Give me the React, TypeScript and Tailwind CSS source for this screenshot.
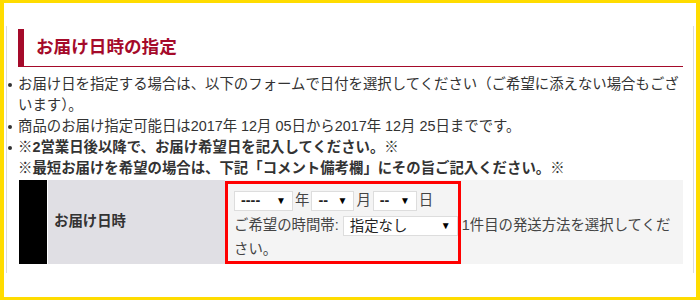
import React from "react";

const FONT = { fontFamily: '"Liberation Sans", "Noto Sans CJK JP", sans-serif' };

function FakeSelect({ w, label, bold }: { w: number; label: string; bold?: boolean }) {
  return (
    <span
      className="inline-flex h-[20px] items-center justify-between border border-[#dddddd] bg-white pl-[6px] pr-[6px] align-middle text-[#222]"
      style={{ width: w }}
    >
      <span className={bold ? "font-bold leading-none" : "leading-none"}>{label}</span>
      <span className="text-[10px] leading-none text-black">▼</span>
    </span>
  );
}

function Dot() {
  return (
    <span className="flex w-[11px] shrink-0 justify-start pt-[9px]">
      <span className="ml-[1px] block h-[4px] w-[4px] rounded-full bg-[#333]" />
    </span>
  );
}

export default function App() {
  return (
    <div
      className="h-[300px] w-[700px] overflow-hidden border-x-4 border-y-[3px] border-[#ffdc00] bg-white text-[14.4px] text-[#333]"
      style={FONT}
    >
      <div className="mx-[2px] mt-[23px] h-[247px] border-x border-[#dcdcdc] pl-[11px] pr-[10px] pt-[3px]">
        <div className="flex h-[38px] items-center border-b border-l-[6px] border-[#a50a2a] pl-[12px] text-[17.6px] font-bold text-[#a50a2a]">
          お届け日時の指定
        </div>
        <ul className="mt-[7px] ml-[-11px] leading-[21px]">
          <li className="flex">
            <Dot />
            <span>
              お届け日を指定する場合は、以下のフォームで日付を選択してください（ご希望に添えない場合もございます）。
            </span>
          </li>
          <li className="flex">
            <Dot />
            <span>商品のお届け指定可能日は2017年 12月 05日から2017年 12月 25日までです。</span>
          </li>
          <li className="flex font-bold">
            <Dot />
            <span>
              ※2営業日後以降で、お届け希望日を記入してください。※
              <br />
              ※最短お届けを希望の場合は、下記「コメント備考欄」にその旨ご記入ください。※
            </span>
          </li>
        </ul>
        <div className="ml-[1px] mt-[1px] flex h-[84px]">
          <div className="w-[28px] shrink-0 bg-black" />
          <div className="ml-[1px] flex w-[177px] shrink-0 items-center bg-[#e0dfe4] pl-[6px] font-bold text-[#333]">
            お届け日時
          </div>
          <div className="relative flex-1 bg-[#f4f4f4] pl-[9px] pr-[6px] pt-[8px] text-[#444]">
            <div className="flex h-[25px] items-center gap-[1px]">
              <FakeSelect w={59} label="----" bold />
              <span className="px-[1px]">年</span>
              <FakeSelect w={43} label="--" bold />
              <span className="px-[1px]">月</span>
              <FakeSelect w={44} label="--" bold />
              <span className="px-[1px]">日</span>
            </div>
            <div className="leading-[24px]">
              ご希望の時間帯:{" "}
              <FakeSelect w={115} label="指定なし" />
              {" "}1件目の発送方法を選択してください。
            </div>
            <div className="pointer-events-none absolute left-0 top-[1px] h-[83px] w-[236px] border-[3px] border-[#ff0000]" />
          </div>
        </div>
      </div>
    </div>
  );
}
